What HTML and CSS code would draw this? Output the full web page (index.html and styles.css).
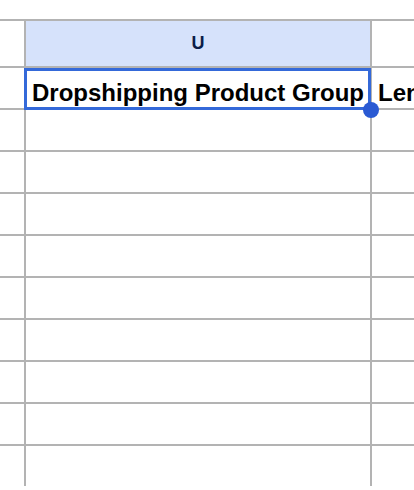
FILE: index.html
```html
<!DOCTYPE html>
<html>
<head>
<meta charset="utf-8">
<link rel="stylesheet" href="styles.css">
</head>
<body>
<div class="sheet">
  <div class="cell corner"></div>
  <div class="cell colhead selected-head">U</div>
  <div class="cell colhead"></div>

  <div class="cell rowhead"></div>
  <div class="cell data active"><span class="text">Dropshipping Product Group</span><span class="handle"></span></div>
  <div class="cell data"><span class="text">Length</span></div>

  <div class="cell rowhead"></div><div class="cell data"></div><div class="cell data"></div>
  <div class="cell rowhead"></div><div class="cell data"></div><div class="cell data"></div>
  <div class="cell rowhead"></div><div class="cell data"></div><div class="cell data"></div>
  <div class="cell rowhead"></div><div class="cell data"></div><div class="cell data"></div>
  <div class="cell rowhead"></div><div class="cell data"></div><div class="cell data"></div>
  <div class="cell rowhead"></div><div class="cell data"></div><div class="cell data"></div>
  <div class="cell rowhead"></div><div class="cell data"></div><div class="cell data"></div>
  <div class="cell rowhead"></div><div class="cell data"></div><div class="cell data"></div>
  <div class="cell rowhead"></div><div class="cell data"></div><div class="cell data"></div>
</div>
</body>
</html>
```

FILE: styles.css
```css
html, body {
  margin: 0;
  padding: 0;
  background: #ffffff;
  overflow: hidden;
  height: 490px;
}

.sheet {
  margin-top: 19px;
  display: grid;
  grid-template-columns: 24px 344px 1fr;
  grid-template-rows: 45px repeat(10, 40px);
  gap: 2px;
  padding-top: 2px;
  background: #b3b3b3;
  font-family: "Liberation Sans", Arial, sans-serif;
}

.cell {
  background: #ffffff;
  min-width: 0;
  overflow: visible;
}

.colhead {
  display: flex;
  align-items: center;
  justify-content: center;
  font-weight: bold;
  font-size: 18px;
  color: #0b1d48;
}

.selected-head {
  background: #d6e2fb;
}

.data {
  display: flex;
  align-items: flex-end;
  padding: 0 0 1px 6px;
  box-sizing: border-box;
  font-weight: bold;
  font-size: 24px;
  line-height: 28px;
  color: #000000;
  white-space: nowrap;
}

.data .text {
  overflow: hidden;
}

.active {
  position: relative;
  z-index: 2;
}

.active::after {
  content: "";
  position: absolute;
  left: -2px;
  top: 0;
  right: -1px;
  bottom: -2px;
  border: 3px solid #3469d9;
  pointer-events: none;
}

.handle {
  position: absolute;
  left: 337px;
  top: 34px;
  width: 16px;
  height: 16px;
  border-radius: 50%;
  background: #2a5ad3;
  z-index: 3;
}
```
